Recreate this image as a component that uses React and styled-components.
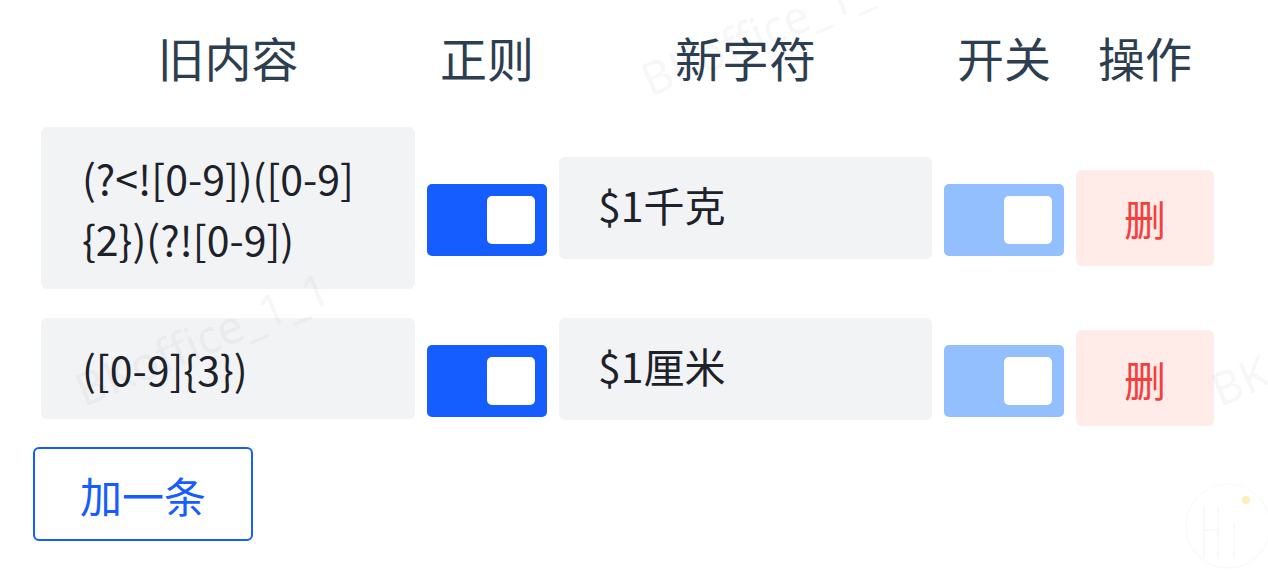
import React from 'react';
import styled, { createGlobalStyle } from 'styled-components';

const GlobalStyle = createGlobalStyle`
  html, body {
    margin: 0;
    padding: 0;
    background: #ffffff;
  }
  body {
    font-family: 'Noto Sans CJK SC', 'Noto Sans', sans-serif;
  }
`;

const Page = styled.div`
  position: relative;
  width: 1268px;
  height: 587px;
  overflow: hidden;
  box-sizing: border-box;
  padding: 30px 0 0 33px;
`;

const Table = styled.div`
  display: flex;
  flex-direction: column;
  gap: 22px;
  margin-left: 8px;
`;

const Row = styled.div`
  display: grid;
  grid-template-columns: 374px 120px 373px 120px 138px;
  column-gap: 12px;
  align-items: center;
`;

const HeadRow = styled(Row)`
  margin-bottom: 21px;
`;

const HeadCell = styled.div`
  font-size: 47px;
  line-height: 54px;
  color: #2c3e50;
  text-align: center;
`;

const OldText = styled.div`
  box-sizing: border-box;
  background: #f2f3f5;
  border-radius: 6px;
  padding: 20px 41px;
  font-size: 41px;
  line-height: 61px;
  color: #1d2129;
  word-break: break-all;
`;

const NewText = styled.div`
  box-sizing: border-box;
  background: #f2f3f5;
  border-radius: 6px;
  padding: 16px 39px 24px;
  font-size: 41px;
  line-height: 62px;
  color: #1d2129;
`;

const Toggle = styled.div`
  box-sizing: border-box;
  width: 120px;
  height: 72px;
  margin-top: 24px;
  border-radius: 5px;
  padding: 12px;
  display: flex;
  justify-content: flex-end;
  background: ${({ $light }) => ($light ? '#94bfff' : '#165dff')};
`;

const Knob = styled.span`
  width: 48px;
  height: 48px;
  border-radius: 5px;
  background: #ffffff;
`;

const DeleteButton = styled.button`
  width: 138px;
  height: 96px;
  margin-top: 19px;
  border: none;
  border-radius: 6px;
  background: #ffece8;
  color: #f53f3f;
  font-family: inherit;
  font-size: 42px;
  padding: 0;
`;

const AddButton = styled.button`
  margin-top: 21px;
  width: 220px;
  height: 94px;
  box-sizing: border-box;
  border: 2px solid #165dff;
  border-radius: 6px;
  background: #ffffff;
  color: #165dff;
  font-family: inherit;
  font-size: 42px;
  padding: 0;
`;

const Watermark = styled.span`
  position: absolute;
  left: ${({ $x }) => $x}px;
  top: ${({ $y }) => $y}px;
  font-family: 'Noto Sans', sans-serif;
  font-size: 46px;
  line-height: 1;
  color: rgba(0, 0, 0, 0.055);
  white-space: nowrap;
  transform: rotate(-23deg);
  transform-origin: 0 100%;
  pointer-events: none;
`;

const Logo = styled.svg`
  position: absolute;
  left: 1184px;
  top: 480px;
`;

const rules = [
  { old: '(?<![0-9])([0-9]{2})(?![0-9])', value: '$1千克' },
  { old: '([0-9]{3})', value: '$1厘米' },
];

export default function App() {
  return (
    <Page>
      <GlobalStyle />
      <Table>
        <HeadRow>
          <HeadCell>旧内容</HeadCell>
          <HeadCell>正则</HeadCell>
          <HeadCell>新字符</HeadCell>
          <HeadCell>开关</HeadCell>
          <HeadCell>操作</HeadCell>
        </HeadRow>
        {rules.map((rule) => (
          <Row key={rule.old}>
            <OldText>{rule.old}</OldText>
            <Toggle>
              <Knob />
            </Toggle>
            <NewText>{rule.value}</NewText>
            <Toggle $light>
              <Knob />
            </Toggle>
            <DeleteButton>删</DeleteButton>
          </Row>
        ))}
      </Table>
      <AddButton>加一条</AddButton>
      <Watermark $x={652} $y={56}>BKoffice_1_1</Watermark>
      <Watermark $x={86} $y={366}>BKoffice_1_1</Watermark>
      <Watermark $x={1222} $y={366}>BKoffice_1_1</Watermark>
      <Logo width="88" height="92" viewBox="0 0 88 92">
        <circle cx="44" cy="46" r="42" fill="none" stroke="#fafafa" strokeWidth="1.5" />
        <path d="M20 28 V78 M34 28 V78 M20 50 H34 M50 44 V78" stroke="#f9f9f9" strokeWidth="2" fill="none" />
        <circle cx="62" cy="20" r="4" fill="#fcefbb" />
      </Logo>
    </Page>
  );
}
